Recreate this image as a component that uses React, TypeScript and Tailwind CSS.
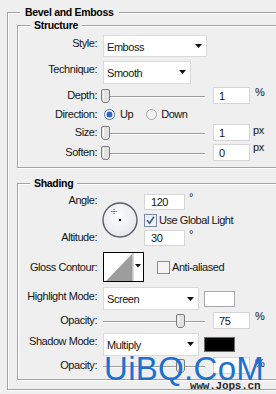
import type { ReactNode } from "react";

// etched group-box line: dark rule with a white highlight under it
const etched = "border-[#a3a3a3] shadow-[inset_1px_1px_0_#fff,0_1px_0_#fff]";

function Group({ title, legend, className, children }: { title: string; legend: string; className: string; children: ReactNode }) {
  return (
    <div className={`relative border-t border-l border-b ${etched} ${className}`}>
      <span className={`absolute top-[-8px] bg-[#efefef] font-bold leading-[14px] tracking-[-0.3px] text-[10.5px] text-black ${legend}`}>{title}</span>
      {children}
    </div>
  );
}

function Label({ children, up }: { children: ReactNode; up?: boolean }) {
  return <span className={`w-[79px] shrink-0 text-right leading-[13px] ${up ? "-mt-[5px]" : ""}`}>{children}</span>;
}

function Dropdown({ value, className }: { value: string; className: string }) {
  return (
    <div className={`ml-[6px] flex items-center justify-between bg-white border border-[#dadada] pl-[3px] pr-[4px] ${className}`}>
      <span className="pt-[2px]">{value}</span>
      <svg width="7" height="4" viewBox="0 0 7 4">
        <path d="M0 0h7L3.5 4z" fill="#111" />
      </svg>
    </div>
  );
}

function NumField({ value }: { value: string }) {
  return (
    <div className="ml-[7px] w-[37px] h-[17px] shrink-0 bg-white border border-[#d6d6d6] pl-[5px] leading-[16px]">{value}</div>
  );
}

function Slider({ at }: { at: number }) {
  return (
    <div className="relative ml-[4px] w-[105px] h-[14px] shrink-0">
      <div className="absolute left-[2px] right-[1px] top-[7px] h-[2px] border-t border-b border-t-[#9c9c9c] border-b-white" />
      <svg className="absolute top-0" style={{ left: at }} width="9" height="14" viewBox="0 0 9 14">
        <path d="M2 .5h5a1.5 1.5 0 0 1 1.5 1.5v9l-2 2.5h-4l-2-2.5V2A1.5 1.5 0 0 1 2 .5z" fill="#e2e2e2" stroke="#7c7c7c" />
        <path d="M2.5 2v8" stroke="#fff" />
      </svg>
    </div>
  );
}

function Radio({ on }: { on?: boolean }) {
  return (
    <svg width="11" height="11" viewBox="0 0 11 11" className="shrink-0">
      <circle cx="5.5" cy="5.5" r="5" fill={on ? "#fff" : "#f2f2f2"} stroke={on ? "#4b74ad" : "#a9a9a9"} />
      {on && <circle cx="5.5" cy="5.5" r="3" fill="#2a66c4" />}
    </svg>
  );
}

function Check({ on }: { on?: boolean }) {
  return (
    <svg width="13" height="13" viewBox="0 0 13 13" className="shrink-0">
      <rect x=".5" y=".5" width="12" height="12" fill={on ? "#eef1f6" : "#f3f3f3"} stroke={on ? "#7a8aa5" : "#8e8e8e"} />
      {on && <path d="M3 6.2l2.6 3L10 2.8" fill="none" stroke="#3c5a94" strokeWidth="1.6" />}
    </svg>
  );
}

function Unit({ children, className }: { children: ReactNode; className: string }) {
  return <span className={`self-start leading-[13px] ${className}`}>{children}</span>;
}

export default function App() {
  return (
    <div className="relative w-[276px] h-[394px] overflow-hidden bg-[#efefef] text-[11px] tracking-[-0.45px] text-[#151515] font-['Liberation_Sans',Arial,sans-serif]">
      <Group title="Bevel and Emboss" legend="left-[12px] px-[5px]" className="mt-[12px] ml-[7px] w-[300px] pb-[9px]">
        <Group title="Structure" legend="left-[12px] px-[4px]" className="mt-[12px] ml-[9px] pt-[8px] pb-[3px]">
          <div className="flex items-center h-[24px]">
            <Label up>Style:</Label>
            <Dropdown value="Emboss" className="w-[104px] h-[22px]" />
          </div>
          <div className="flex items-center h-[28px]">
            <Label up>Technique:</Label>
            <Dropdown value="Smooth" className="w-[88px] h-[23px]" />
          </div>
          <div className="flex items-center h-[19px]">
            <Label>Depth:</Label>
            <Slider at={0} />
            <NumField value="1" />
            <Unit className="ml-[5px]">%</Unit>
          </div>
          <div className="flex items-center h-[19px]">
            <Label>Direction:</Label>
            <span className="ml-[7px]"><Radio on /></span>
            <span className="ml-[5px] leading-[13px]">Up</span>
            <span className="ml-[13px]"><Radio /></span>
            <span className="ml-[4px] leading-[13px]">Down</span>
          </div>
          <div className="flex items-center h-[17px]">
            <Label>Size:</Label>
            <Slider at={0} />
            <NumField value="1" />
            <Unit className="ml-[3px]">px</Unit>
          </div>
          <div className="flex items-center h-[23px]">
            <Label>Soften:</Label>
            <Slider at={0} />
            <NumField value="0" />
            <Unit className="ml-[3px]">px</Unit>
          </div>
        </Group>

        <Group title="Shading" legend="left-[12px] px-[4px]" className="mt-[15px] ml-[9px] pt-[8px] pb-[5px]">
          <div className="flex h-[55px]">
            <div className="w-[79px] shrink-0 flex flex-col text-right">
              <span className="h-[19px] leading-[17px]">Angle:</span>
              <span className="h-[18px]" />
              <span className="h-[18px] leading-[17px]">Altitude:</span>
            </div>
            <div className="ml-[5px] flex items-center">
              <svg width="36" height="36" viewBox="0 0 36 36">
                <defs>
                  <radialGradient id="dial" cx="45%" cy="40%" r="60%">
                    <stop offset="0" stopColor="#ffffff" />
                    <stop offset="1" stopColor="#e4e6ea" />
                  </radialGradient>
                </defs>
                <circle cx="18" cy="18" r="17" fill="url(#dial)" stroke="#56606f" strokeWidth="1.4" />
                <path d="M9.5 9.5h5M12 7v5" stroke="#333" strokeWidth="1" strokeDasharray="1 1" />
                <rect x="17" y="17" width="2" height="2" fill="#000" />
              </svg>
            </div>
            <div className="ml-[6px] flex flex-col">
              <div className="flex items-center h-[19px]">
                <div className="w-[41px] h-[16px] bg-white border border-[#d6d6d6] pl-[6px] leading-[15px]">120</div>
                <Unit className="ml-[4px] -mt-[1px]">°</Unit>
              </div>
              <div className="flex items-center h-[18px]">
                <Check on />
                <span className="ml-[2px] leading-[13px]">Use Global Light</span>
              </div>
              <div className="flex items-center h-[18px]">
                <div className="w-[41px] h-[16px] bg-white border border-[#d6d6d6] pl-[6px] leading-[15px]">30</div>
                <Unit className="ml-[4px] -mt-[1px]">°</Unit>
              </div>
            </div>
          </div>

          <div className="flex items-center h-[40px]">
            <Label>Gloss Contour:</Label>
            <svg className="ml-[6px] shrink-0" width="41" height="30" viewBox="0 0 41 30">
              <rect x=".5" y=".5" width="40" height="29" fill="#fff" stroke="#000" />
              <path d="M3 29L29.5 1.5V29z" fill="#9d9d9d" />
              <path d="M30 1v28" stroke="#b5b5b5" />
              <path d="M32 12h6l-3 3.5z" fill="#111" />
            </svg>
            <span className="ml-[13px]"><Check /></span>
            <span className="ml-[2px] leading-[13px]">Anti-aliased</span>
          </div>

          <div className="flex items-center h-[23px]">
            <Label up>Highlight Mode:</Label>
            <Dropdown value="Screen" className="w-[96px] h-[23px]" />
            <div className="ml-[5px] w-[31px] h-[16px] bg-white border border-[#a8a8a8]" />
          </div>
          <div className="flex items-center h-[21px]">
            <Label>Opacity:</Label>
            <Slider at={75} />
            <NumField value="75" />
            <Unit className="ml-[5px]">%</Unit>
          </div>
          <div className="flex items-center h-[26px]">
            <Label up>Shadow Mode:</Label>
            <Dropdown value="Multiply" className="w-[96px] h-[23px]" />
            <div className="ml-[5px] w-[31px] h-[15px] bg-black border border-[#6a6a6a]" />
          </div>
          <div className="flex items-center h-[17px]">
            <Label>Opacity:</Label>
            <Slider at={75} />
            <NumField value="" />
            <Unit className="ml-[5px]">%</Unit>
          </div>
        </Group>
      </Group>

      {/* watermark over the bottom rows */}
      <span className="absolute left-[104px] top-[352px] text-[33px] leading-[33px] text-[#1d6fd0] tracking-[0.3px]">
        UiBQ.CoM
      </span>
      <span className="absolute left-[190px] top-[380px] font-['Liberation_Mono',monospace] font-bold text-[11px] leading-[12px] tracking-[-0.2px] text-[#2a2a2a]">
        www.Jops.cn
      </span>
    </div>
  );
}
